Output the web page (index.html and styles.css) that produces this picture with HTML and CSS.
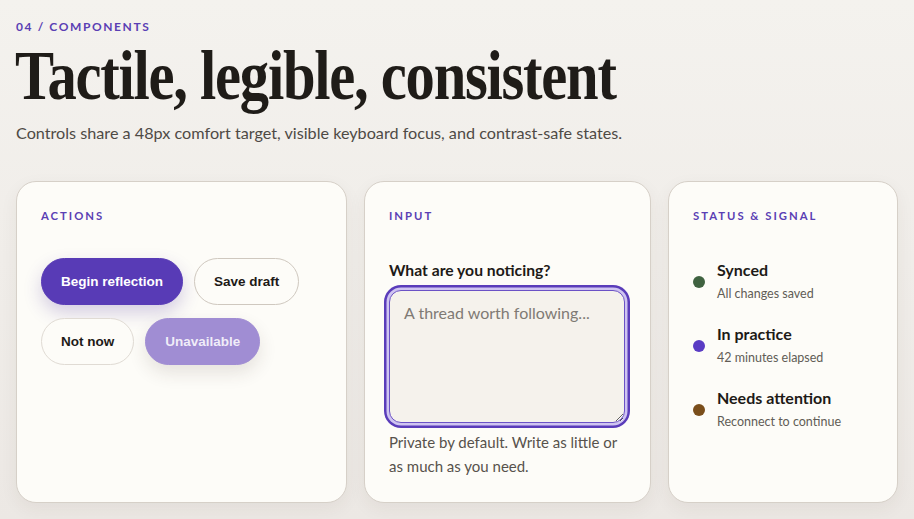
FILE: index.html
```html
<!DOCTYPE html>
<html lang="en">
<head>
<meta charset="UTF-8" />
<title>Components</title>
<link rel="stylesheet" href="styles.css">
</head>
<body>
  <main class="page">
    <p class="eyebrow">04 / Components</p>
    <h1 class="title">Tactile, legible, consistent</h1>
    <p class="lede">Controls share a 48px comfort target, visible keyboard focus, and contrast-safe states.</p>

    <div class="cards">
      <section class="card">
        <h2 class="card-label">Actions</h2>
        <div class="btn-row">
          <button class="btn btn-primary">Begin reflection</button>
          <button class="btn btn-outline">Save draft</button>
          <button class="btn btn-ghost">Not now</button>
          <button class="btn btn-disabled" disabled>Unavailable</button>
        </div>
      </section>

      <section class="card">
        <h2 class="card-label">Input</h2>
        <label class="field-label" for="notice">What are you noticing?</label>
        <textarea id="notice" class="field" placeholder="A thread worth following..."></textarea>
        <p class="field-help">Private by default. Write as little or as much as you need.</p>
      </section>

      <section class="card">
        <h2 class="card-label">Status &amp; Signal</h2>
        <ul class="status-list">
          <li class="status">
            <span class="dot dot-ok"></span>
            <div>
              <div class="status-title">Synced</div>
              <div class="status-sub">All changes saved</div>
            </div>
          </li>
          <li class="status">
            <span class="dot dot-active"></span>
            <div>
              <div class="status-title">In practice</div>
              <div class="status-sub">42 minutes elapsed</div>
            </div>
          </li>
          <li class="status">
            <span class="dot dot-warn"></span>
            <div>
              <div class="status-title">Needs attention</div>
              <div class="status-sub">Reconnect to continue</div>
            </div>
          </li>
        </ul>
      </section>
    </div>
  </main>
</body>
</html>
```

FILE: styles.css
```css
* {
  box-sizing: border-box;
}
html, body {
  margin: 0;
  padding: 0;
  height: 100%;
}
body {
  font-family: Lato, "Noto Sans", sans-serif;
  color: #1d1a17;
  background: linear-gradient(180deg, #f4f2ee 0%, #ece8e4 100%);
  overflow: hidden;
}
.page {
  padding: 19px 16px 0 16px;
}

.eyebrow {
  margin: 0;
  font-size: 12px;
  font-weight: 700;
  letter-spacing: 1.6px;
  text-transform: uppercase;
  color: #5a3fb4;
  line-height: 16px;
}
/* display serif: condensed to match the narrow headline face */
.title {
  margin: 2px 0 0 -1px;
  font-family: "Liberation Serif", "DejaVu Serif", serif;
  font-weight: 700;
  font-size: 69px;
  line-height: 78px;
  letter-spacing: -1.5px;
  color: #1f1c18;
  white-space: nowrap;
  transform: scaleX(0.85);
  transform-origin: left center;
}
.lede {
  margin: 7px 0 0 0;
  font-size: 16.2px;
  line-height: 22px;
  color: #4e4a45;
}

.cards {
  display: grid;
  grid-template-columns: 331px 287px 230px;
  gap: 17px;
  margin-top: 37px;
}
.card {
  background: #fdfcf8;
  border: 1px solid #d6d0c8;
  border-radius: 20px;
  height: 322px;
  padding: 27px 24px 24px 24px;
  box-shadow: 0 6px 18px rgba(60, 45, 30, 0.06);
}
.card-label {
  margin: 0;
  font-size: 11.3px;
  line-height: 14px;
  font-weight: 700;
  letter-spacing: 2px;
  text-transform: uppercase;
  color: #5a3fb4;
}

/* Buttons */
.btn-row {
  display: flex;
  flex-wrap: wrap;
  gap: 13px 11px;
  margin-top: 35px;
  width: 270px;
}
.btn {
  height: 47px;
  padding: 0 19px;
  border-radius: 24px;
  font-family: "Liberation Sans", Arial, sans-serif;
  font-weight: 700;
  font-size: 13.5px;
  color: #1d1a17;
  background: #fdfcf8;
  border: 1px solid #cfc8bf;
  cursor: pointer;
}
.btn-primary {
  background: #583bb6;
  border-color: #583bb6;
  color: #fff;
  box-shadow: 0 8px 18px rgba(70, 40, 150, 0.22);
}
.btn-ghost {
  border-color: #e0dbd4;
}
.btn-disabled {
  background: #a08dd3;
  border-color: #a08dd3;
  color: rgba(255, 255, 255, 0.85);
  box-shadow: 0 8px 18px rgba(60, 45, 30, 0.12);
  cursor: not-allowed;
}

/* Input */
.field-label {
  display: block;
  margin-top: 37px;
  font-size: 15.7px;
  font-weight: 700;
  line-height: 20px;
}
.field {
  display: block;
  width: 236px;
  height: 133px;
  margin: 10px 0 0 0;
  padding: 12px 14px;
  border: 1px solid #6b52c6;
  border-radius: 12px;
  background: #f5f2ec;
  box-shadow: 0 0 0 2.5px #cfc4f1, 0 0 0 5px #5a3cba;
  font-family: Lato, "Noto Sans", sans-serif;
  font-size: 16px;
  color: #1d1a17;
  outline: none;
}
.field::placeholder {
  color: #7f7a74;
}
.field-help {
  margin: 7px 0 0 0;
  font-size: 15px;
  line-height: 24px;
  color: #57524c;
  width: 232px;
}

/* Status */
.status-list {
  list-style: none;
  margin: 37px 0 0 0;
  padding: 0;
  display: flex;
  flex-direction: column;
  gap: 21px;
}
.status {
  display: flex;
  align-items: center;
  gap: 12px;
}
.dot {
  width: 12px;
  height: 12px;
  border-radius: 50%;
  flex: none;
}
.dot-ok { background: #3f6240; }
.dot-active { background: #5a3cc4; }
.dot-warn { background: #7a4e1b; }
.status-title {
  font-size: 16px;
  font-weight: 700;
  line-height: 20px;
}
.status-sub {
  margin-top: 5px;
  font-size: 12.5px;
  line-height: 18px;
  color: #615c56;
}
```
